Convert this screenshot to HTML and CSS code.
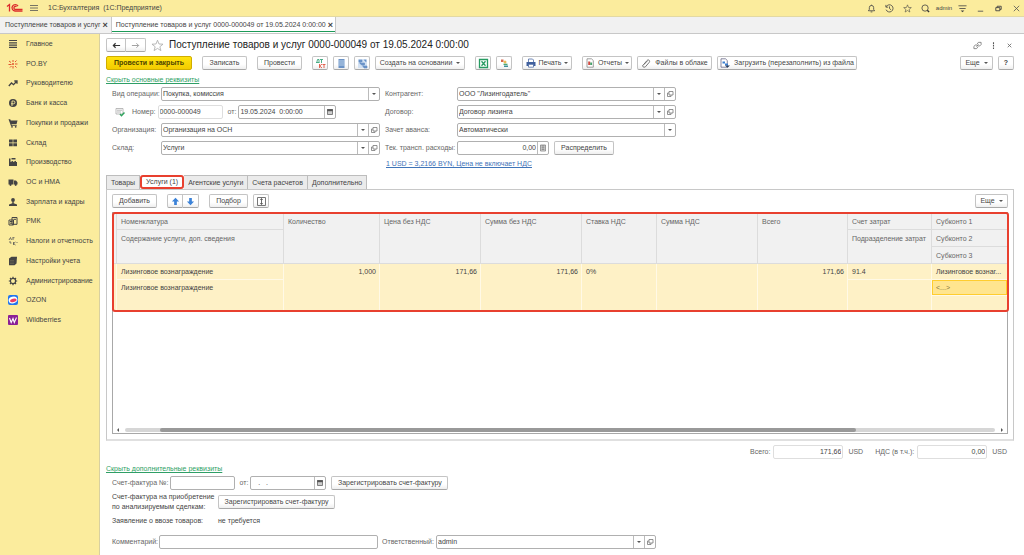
FILE: index.html
```html
<!DOCTYPE html>
<html lang="ru">
<head>
<meta charset="utf-8">
<title>Поступление товаров и услуг</title>
<link rel="stylesheet" href="styles.css">
</head>
<body>
<svg class="defs" aria-hidden="true">
  <symbol id="open" viewBox="0 0 8 8"><path d="M3 1.500h4v3.500h-4zM3 3H1.500v3.500h3.500V5" fill="none" stroke="#777" stroke-width=".8"/></symbol>
  <symbol id="calendar" viewBox="0 0 8 8"><path d="M1.500 1.500h5v5h-5z" fill="#ccc" stroke="#666" stroke-width=".8"/><path d="M1.200 1.200h5.600v2H1.200z" fill="#555"/></symbol>
  <symbol id="star" viewBox="0 0 16 16"><path d="M8 1.500l1.800 4.600 5 .3-3.900 3.100 1.300 4.800L8 11.600l-4.200 2.700 1.300-4.800L1.200 6.400l5-.3z" fill="none" stroke="currentColor"/></symbol>
</svg>

<header class="topbar">
  <svg class="logo" viewBox="0 0 17 10"><path d="M1 3.500L3.500 1.500V8.500M12 3.200A3.200 3.200 0 1 0 9 8h7.500M10.500 3.800A1.500 1.500 0 1 0 9 6.300h7.500" fill="none" stroke="#dc2b2b" stroke-width="1.300"/></svg>
  <button class="plain" aria-label="Меню"><svg class="ico8" viewBox="0 0 8 8"><path d="M0 1.500h8M0 4h8M0 6.500h8" stroke="#555" stroke-width=".8"/></svg></button>
  <span class="app-title">1С:Бухгалтерия&nbsp; (1С:Предприятие)</span>
  <div class="top-tools">
    <button class="plain" aria-label="Уведомления"><svg class="ico9" viewBox="0 0 10 10"><path d="M1.500 7.500h7L7.400 6V4a2.400 2.400 0 0 0-4.800 0v2zM4 8.800h2M5 .8v1" fill="none" stroke="#444" stroke-width=".9"/></svg></button>
    <button class="plain" aria-label="История"><svg class="ico9" viewBox="0 0 10 10"><path d="M1.400 3A4 4 0 1 1 1.200 6.300M1 1v2.500h2.500M5 2.700V5l1.800 1.500" fill="none" stroke="#444" stroke-width=".9"/></svg></button>
    <button class="plain dark" aria-label="Избранное"><svg class="ico9"><use href="#star"/></svg></button>
    <button class="plain" aria-label="Поиск"><svg class="ico9" viewBox="0 0 10 10"><circle cx="4.500" cy="4.500" r="3.500" fill="none" stroke="#444" stroke-width=".9"/><path d="M7 7l2 2" stroke="#333" stroke-width="1.500"/></svg></button>
    <span class="user">admin</span>
    <button class="plain" aria-label="Настройки"><svg class="ico9" viewBox="0 0 10 10"><path d="M.5 2h9M1.500 5h7" stroke="#444" stroke-width=".9"/><path d="M3 7.200h4L5 9.200z" fill="#444"/></svg></button>
    <button class="plain" aria-label="Свернуть"><svg class="ico9" viewBox="0 0 10 10"><path d="M2 8h6" stroke="#555"/></svg></button>
    <button class="plain" aria-label="Восстановить"><svg class="ico9" viewBox="0 0 10 10"><path d="M2 4h4.500v3.500H2zM3.500 4V2.500H8V6H6.500" fill="none" stroke="#444"/></svg></button>
    <button class="plain" aria-label="Закрыть"><svg class="ico9" viewBox="0 0 10 10"><path d="M2 2l6 6M8 2L2 8" stroke="#555" stroke-width=".9"/></svg></button>
  </div>
</header>

<nav class="window-tabs" aria-label="Открытые окна">
  <div class="window-tab">Поступление товаров и услуг <button class="plain close" aria-label="Закрыть вкладку">×</button></div>
  <div class="window-tab current"><span>Поступление товаров и услуг 0000-000049 от 19.05.2024 0:00:00</span> <button class="plain close" aria-label="Закрыть вкладку">×</button></div>
</nav>

<div class="body">
  <nav class="sidebar" aria-label="Разделы">
    <div class="sections">
    <a href="#"><svg viewBox="0 0 10 10"><path d="M1 1.500h8M1 3.800h8M1 6.100h8M1 8.400h8" stroke="#444" stroke-width="1.200"/></svg>Главное</a>
    <a href="#"><svg viewBox="0 0 10 10"><path d="M5 1v2M1 2l2 1.500M.5 5.500h3M2 8.500l1.500-1.500M5 7v2.500M7 3l1.500-1.500M7 5h2.500M7 7l1.500 1.500" stroke="#e2532f"/><circle cx="5" cy="5" r="1" fill="#e2532f"/></svg>РО.BY</a>
    <a href="#"><svg viewBox="0 0 10 10"><path d="M.8 8l2.700-3 2 1.700L8.500 3.500M6.300 3h2.700v2.700" fill="none" stroke="#444" stroke-width="1.300"/></svg>Руководителю</a>
    <a href="#"><svg viewBox="0 0 10 10"><circle cx="5" cy="5" r="4" fill="#444"/><path d="M4 8V3h1.500a1.300 1.300 0 0 1 0 2.800H3" fill="none" stroke="#fbec9d" stroke-width=".9"/></svg>Банк и касса</a>
    <a href="#"><svg viewBox="0 0 10 10"><path d="M.5 1.200h1.700l.6 1.300h6.700l-1 3.800H3.500l.3.900h5v.8H3z" fill="#444"/><circle cx="4" cy="8.800" r=".9" fill="#444"/><circle cx="7.700" cy="8.800" r=".9" fill="#444"/></svg>Покупки и продажи</a>
    <a href="#"><svg viewBox="0 0 10 10"><path d="M1 1.500h3.700v3H1zM5.300 1.500H9v3H5.300zM1 5.300h3.700v3H1zM5.300 5.300H9v3H5.300z" fill="#444"/></svg>Склад</a>
    <a href="#"><svg viewBox="0 0 10 10"><path d="M1 9V1.500h1.500V5L5 3.800V5l3-1.200V5h1v4zM3.500 1h4v1.500h-4z" fill="#444"/></svg>Производство</a>
    <a href="#"><svg viewBox="0 0 10 10"><path d="M.5 2.500h5v5h-5zM6 3.500h2l1.500 1.800v2.200H6z" fill="#444"/><circle cx="2.500" cy="7.800" r="1.100" fill="#444"/><circle cx="7.700" cy="7.800" r="1.100" fill="#444"/></svg>ОС и НМА</a>
    <a href="#"><svg viewBox="0 0 10 10"><circle cx="5" cy="3" r="1.900" fill="#444"/><path d="M4.300 4.500h1.400v1.700L9 7.500V9H1V7.500l3.300-1.300z" fill="#444"/></svg>Зарплата и кадры</a>
    <a href="#"><svg viewBox="0 0 10 10"><path d="M4 1.500h5v6.800H4zM1 4h4.500v5H1zM5.500 3.300H8M2 5.500h2.500M2 7.200h2.500" fill="none" stroke="#444"/></svg>РМК</a>
    <a href="#"><svg viewBox="0 0 10 10"><path d="M1 4L2.500 1.500 3.500 4M5 1.500v2.500M4.500 1.700h2M2 5v2h1.500M5.500 6v3M7.500 6L5.500 7.500 7.500 9M8.500 6.500h1" fill="none" stroke="#555" stroke-width=".8"/></svg>Налоги и отчетность</a>
    <a href="#"><svg viewBox="0 0 10 10"><path d="M1 2.500L3.500.8H9L8.500 7.500 6.500 9.300H1z" fill="#444"/><path d="M2 4.500h4M2 6h4M2 7.500h4" stroke="#87815f" stroke-width=".4"/></svg>Настройки учета</a>
    <a href="#"><svg viewBox="0 0 10 10"><circle cx="5" cy="5" r="2.600" fill="none" stroke="#444" stroke-width="1.200"/><path d="M5 .8v1.500M5 7.700v1.500M.8 5h1.500M7.700 5h1.500M2 2l1 1M7 7l1 1M8 2L7 3M3 7L2 8" stroke="#444" stroke-width="1.200"/></svg>Администрирование</a>
    <a href="#"><svg viewBox="0 0 10 10"><rect width="10" height="10" rx="2" fill="#2275ee"/><ellipse cx="5" cy="5" rx="4.400" ry="3.300" fill="#fff" transform="rotate(-15 5 5)"/><ellipse cx="5.200" cy="5.500" rx="3.300" ry="1.700" fill="#ee3b63" transform="rotate(-15 5 5)"/></svg>OZON</a>
    <a href="#"><svg viewBox="0 0 10 10"><rect width="10" height="10" rx="1" fill="#8b2096"/><path d="M1.500 3l1.700 4.500L5 3.500l1.300 4L8.500 2.500" fill="none" stroke="#fff" stroke-width="1.100"/></svg>Wildberries</a>
    </div>
  </nav>

  <main class="content">
    <div class="title-row">
      <div class="joined">
        <button class="btn" aria-label="Назад"><svg class="ico9" viewBox="0 0 10 10"><path d="M1.500 5h7.500M4 2.500L1.500 5 4 7.500" fill="none" stroke="#333" stroke-width="1.300"/></svg></button>
        <button class="btn" aria-label="Вперед"><svg class="ico9" viewBox="0 0 10 10"><path d="M1 5h7.500M6 2.500L8.500 5 6 7.500" fill="none" stroke="#999"/></svg></button>
      </div>
      <button class="plain fav" aria-label="В избранное"><svg class="ico14"><use href="#star"/></svg></button>
      <h1>Поступление товаров и услуг 0000-000049 от 19.05.2024 0:00:00</h1>
      <div class="title-tools">
        <button class="plain" aria-label="Ссылка"><svg class="ico9" viewBox="0 0 10 10"><path d="M4.500 3.500L6 1.500h3V4L7.500 5.500H5M5.500 6.500L4 8.500H1V6l1.500-1.500H5M3.800 6.200l2.400-2.400" fill="none" stroke="#666" stroke-width=".8"/></svg></button>
        <button class="plain" aria-label="Еще действия"><svg class="ico9" viewBox="0 0 10 10"><path d="M5 1.500v1.800M5 4.300v1.800M5 7.100v1.800" stroke="#555" stroke-width="1.200"/></svg></button>
        <button class="plain" aria-label="Закрыть"><svg class="ico9" viewBox="0 0 10 10"><path d="M3 3l4 4M7 3L3 7" stroke="#666" stroke-width=".9"/></svg></button>
      </div>
    </div>

    <div class="toolbar">
      <button class="btn primary">Провести и закрыть</button>
      <button class="btn w45">Записать</button>
      <button class="btn w45">Провести</button>
      <div class="group">
        <button class="btn sq" aria-label="Дт Кт"><svg class="ico11" viewBox="0 0 11 11"><path d="M1 4.500h3.500M1.800 4.500L2.500 1.500H4v3M5 1.500h3M6.500 1.500v3.500" fill="none" stroke="#3aa57c" stroke-width=".9"/><path d="M4.500 6v4M7 6L4.700 8 7 10M7.500 6.500h3M9 6.500V10" fill="none" stroke="#e0553f" stroke-width=".9"/></svg></button>
        <button class="btn sq" aria-label="Реестр"><svg class="ico11" viewBox="0 0 11 11"><path d="M2.500 1h6v9h-6z" fill="#6b93c6"/><path d="M2.500 3h6M2.500 5h6M2.500 7h6" stroke="#d6e4f4" stroke-width=".8"/></svg></button>
        <button class="btn sq" aria-label="Структура"><svg class="ico11" viewBox="0 0 11 11"><path d="M1 1h9v9H1z" fill="#d3e1f2"/><path d="M2 2h3v2H2zM4.500 5H7.500v2H4.500zM7 8h3v2H7zM3 4v2h1.500M6 7v2h1M7 2h2v2" fill="#6f97ca" stroke="#5f8bc3" stroke-width=".6"/></svg></button>
        <button class="btn w89">Создать на основании <i class="caret"></i></button>
      </div>
      <div class="group">
        <button class="btn sq" aria-label="Excel"><svg class="ico11" viewBox="0 0 11 11"><path d="M1.500 1.500h8v8h-8z" fill="#fff" stroke="#279b62" stroke-width="1.300"/><path d="M3.500 3.200l4 4.600M7.500 3.200l-4 4.600" stroke="#279b62" stroke-width="1.300"/></svg></button>
        <button class="btn sq" aria-label="Обмен"><svg class="ico11" viewBox="0 0 11 11"><path d="M2 1.500h2.500v2.500H2z" fill="#d7694e"/><circle cx="6" cy="4" r="1.500" fill="#e9bb55"/><path d="M4.500 5.700h4V7h-4z" fill="#4ba878"/><path d="M5 7.500h4V9H5z" fill="#3d8f99"/></svg></button>
      </div>
      <button class="btn w49"><svg class="ico10" viewBox="0 0 10 10"><path d="M2.500 4V1h4l1 1v2" fill="#fff" stroke="#4c6ba5" stroke-width=".8"/><path d="M.5 4h9v4h-9z" fill="#40609d"/><path d="M2.500 6.300h5v2.900h-5z" fill="#fff" stroke="#40609d" stroke-width=".7"/></svg>Печать <i class="caret"></i></button>
      <div class="group">
        <button class="btn w49"><svg class="ico10" viewBox="0 0 10 10"><path d="M2 .8h4.500L8.300 2.500v6.700H2z" fill="#fff" stroke="#777" stroke-width=".7"/><path d="M3.200 3.500h2v3.500h-2z" fill="#d24a41"/><path d="M5.200 4.500h1.900v2.500H5.200z" fill="#45a26b"/></svg>Отчеты <i class="caret"></i></button>
        <button class="btn w74"><svg class="ico10" viewBox="0 0 10 10"><path d="M3 6.500l3.500-3.700M2 7.300l4-4.800c1.500-1.500 3.500.2 2.200 1.900L4.500 8.700C3 10 .8 8.500 2 7" fill="none" stroke="#666" stroke-width=".9"/></svg>Файлы в облаке</button>
        <button class="btn w139"><svg class="ico10" viewBox="0 0 10 10"><path d="M1 .8h4.500L7.300 2.500v6.700H1z" fill="#fff" stroke="#557" stroke-width=".7"/><path d="M2.500 3.500h2.500v2H2.500zM5 5.500h3v2H5z" fill="#3a7fd0"/><path d="M5 7.500h5L7.500 9.800z" fill="#263c5c"/></svg>Загрузить (перезаполнить) из файла</button>
      </div>
      <div class="group end">
        <button class="btn w32">Еще <i class="caret"></i></button>
        <button class="btn sq help">?</button>
      </div>
    </div>

    <a class="toggle" href="#">Скрыть основные реквизиты</a>

    <div class="form">
      <div class="form-col left">
        <div class="row"><label class="lab" for="op">Вид операции:</label>
          <div class="combo"><select id="op"><option>Покупка, комиссия</option></select><span class="cell"><i class="caret"></i></span></div></div>
        <div class="row number-row"><svg class="ico10 posted" viewBox="0 0 10 10"><path d="M1 1.500h7v5.500H1z" fill="#fff" stroke="#aaa" stroke-width=".8"/><path d="M2 3.200h5M2 5h4" stroke="#999" stroke-width=".7"/><path d="M5 7l1.500 1.700L9.500 5.500" fill="none" stroke="#2fa35d" stroke-width="1.500"/></svg><label for="num">Номер:</label>
          <div class="combo faint num"><input id="num" value="0000-000049"></div>
          <label class="from" for="date">от:</label>
          <div class="combo date"><input id="date" value="19.05.2024  0:00:00"><button class="cell" aria-label="Календарь"><svg><use href="#calendar"/></svg></button></div></div>
        <div class="row"><label class="lab" for="org">Организация:</label>
          <div class="combo"><input id="org" value="Организация на ОСН"><button class="cell" aria-label="Выбрать"><i class="caret"></i></button><button class="cell" aria-label="Открыть"><svg><use href="#open"/></svg></button></div></div>
        <div class="row"><label class="lab" for="wh">Склад:</label>
          <div class="combo"><input id="wh" value="Услуги"><button class="cell" aria-label="Выбрать"><i class="caret"></i></button><button class="cell" aria-label="Открыть"><svg><use href="#open"/></svg></button></div></div>
      </div>
      <div class="form-col right">
        <div class="row"><label class="lab" for="agent">Контрагент:</label>
          <div class="combo"><input id="agent" value="ООО &quot;Лизингодатель&quot;"><button class="cell" aria-label="Выбрать"><i class="caret"></i></button><button class="cell" aria-label="Открыть"><svg><use href="#open"/></svg></button></div></div>
        <div class="row"><label class="lab" for="deal">Договор:</label>
          <div class="combo"><input id="deal" value="Договор лизинга"><button class="cell" aria-label="Выбрать"><i class="caret"></i></button><button class="cell" aria-label="Открыть"><svg><use href="#open"/></svg></button></div></div>
        <div class="row"><label class="lab" for="adv">Зачет аванса:</label>
          <div class="combo"><select id="adv"><option>Автоматически</option></select><span class="cell"><i class="caret"></i></span></div></div>
        <div class="row"><label class="lab" for="cost">Тек. трансп. расходы:</label>
          <div class="combo cost"><input id="cost" class="num-in" value="0,00"><button class="cell" aria-label="Калькулятор"><svg viewBox="0 0 8 8"><path d="M1.500 1h5v6h-5z" fill="#ddd" stroke="#777" stroke-width=".7"/><path d="M2.500 2h3M2.500 3.800h3M2.500 5.300h3" stroke="#666" stroke-width=".8"/></svg></button></div>
          <button class="btn w60">Распределить</button></div>
        <a class="rate" href="#">1 USD = 3,2166 BYN, Цена не включает НДС</a>
      </div>
    </div>

    <div class="tabs" role="tablist">
      <button role="tab">Товары</button>
      <button role="tab" class="active" aria-selected="true">Услуги (1)</button>
      <button role="tab">Агентские услуги</button>
      <button role="tab">Счета расчетов</button>
      <button role="tab">Дополнительно</button>
    </div>

    <section class="panel">
      <div class="panel-tools">
        <button class="btn w45">Добавить</button>
        <div class="joined small">
          <button class="btn" aria-label="Вверх"><svg class="ico9" viewBox="0 0 10 10"><path d="M5 .8L9 5H6.500v4h-3V5H1z" fill="#3b82d8"/></svg></button>
          <button class="btn" aria-label="Вниз"><svg class="ico9" viewBox="0 0 10 10"><path d="M5 9.200L9 5H6.500V1h-3v4H1z" fill="#3b82d8"/></svg></button>
        </div>
        <div class="group">
          <button class="btn w39">Подбор</button>
          <button class="btn sq" aria-label="Высота строк"><svg class="ico11" viewBox="0 0 11 11"><path d="M1.500 1.500h8v8h-8z" fill="none" stroke="#777"/><path d="M5.500 2.500v6M4.300 4l1.200-1.400L6.700 4M4.300 7l1.200 1.400L6.700 7" fill="none" stroke="#444" stroke-width=".8"/></svg></button>
        </div>
        <button class="btn w32 end">Еще <i class="caret"></i></button>
      </div>
      <div class="grid">
        <div class="marked">
          <table>
            <colgroup><col class="c0"><col class="c1"><col class="c2"><col class="c3"><col class="c3"><col class="c5"><col class="c3"><col class="c7"><col class="c8"><col class="c9"></colgroup>
            <thead>
              <tr><th rowspan="3" class="mark"></th><th>Номенклатура</th><th rowspan="3">Количество</th><th rowspan="3">Цена без НДС</th><th rowspan="3">Сумма без НДС</th><th rowspan="3">Ставка НДС</th><th rowspan="3">Сумма НДС</th><th rowspan="3">Всего</th><th>Счет затрат</th><th>Субконто 1</th></tr>
              <tr><th rowspan="2">Содержание услуги, доп. сведения</th><th rowspan="2">Подразделение затрат</th><th>Субконто 2</th></tr>
              <tr><th>Субконто 3</th></tr>
            </thead>
            <tbody>
              <tr><td rowspan="3" class="mark"></td><td>Лизинговое вознаграждение</td><td rowspan="3" class="r">1,000</td><td rowspan="3" class="r">171,66</td><td rowspan="3" class="r">171,66</td><td rowspan="3">0%</td><td rowspan="3"></td><td rowspan="3" class="r">171,66</td><td>91.4</td><td>Лизинговое вознаг...</td></tr>
              <tr><td rowspan="2">Лизинговое вознаграждение</td><td rowspan="2"></td><td class="selected">&lt;...&gt;</td></tr>
              <tr><td></td></tr>
            </tbody>
          </table>
        </div>
        <div class="scroll"><i class="arrow back"></i><div class="track"><div class="thumb"></div></div><i class="arrow"></i></div>
      </div>
    </section>

    <div class="totals">
      <label for="total">Всего:</label><div class="combo faint sum"><input id="total" class="num-in" value="171,66"></div><span>USD</span>
      <label class="vat" for="vat">НДС (в т.ч.):</label><div class="combo faint sum"><input id="vat" class="num-in" value="0,00"></div><span>USD</span>
    </div>

    <a class="toggle" href="#">Скрыть дополнительные реквизиты</a>

    <div class="extra">
      <div class="row"><label for="inv">Счет-фактура №:</label><div class="combo inv"><input id="inv"></div>
        <label class="from2" for="invdate">от:</label><div class="combo invdate"><input id="invdate" value="   .   ."><button class="cell" aria-label="Календарь"><svg><use href="#calendar"/></svg></button></div>
        <button class="btn w116">Зарегистрировать счет-фактуру</button></div>
      <div class="row"><span class="wide-label">Счет-фактура на приобретение<br>по анализируемым сделкам:</span><button class="btn w116">Зарегистрировать счет-фактуру</button></div>
      <div class="row"><span class="wide-label">Заявление о ввозе товаров:</span><span class="plain-value">не требуется</span></div>
      <div class="row last"><label class="comment-label" for="com">Комментарий:</label><div class="combo com"><input id="com"></div>
        <label class="resp-label" for="resp">Ответственный:</label><div class="combo resp"><input id="resp" value="admin"><button class="cell" aria-label="Выбрать"><i class="caret"></i></button><button class="cell" aria-label="Открыть"><svg><use href="#open"/></svg></button></div></div>
    </div>
  </main>
</div>
</body>
</html>
```
FILE: styles.css
```css
* { box-sizing: border-box; }
body {
  margin: 0;
  min-height: 100vh;
  display: flex;
  flex-direction: column;
  font: 7px/10px "Liberation Sans", Arial, sans-serif;
  color: #444;
  background: #fff;
}
button, input, select { font: inherit; color: inherit; margin: 0; padding: 0; }
.defs { position: absolute; width: 0; height: 0; }
.plain { border: 0; background: none; display: flex; align-items: center; color: #666; }
.plain.dark { color: #444; }
.ico8 { width: 8px; height: 8px; }
.ico9 { width: 9px; height: 9px; }
.ico10 { width: 10px; height: 10px; flex: none; }
.ico11 { width: 11px; height: 11px; }
.ico14 { width: 13px; height: 13px; }

/* application bar */
.topbar { display: flex; align-items: center; height: 17px; padding: 0 3px 0 6px; background: #fbec9d; border-bottom: 1px solid #e3d9a3; }
.logo { width: 17px; height: 10px; margin-right: 7px; }
.app-title { margin-left: 10px; }
.top-tools { display: flex; align-items: center; gap: 9px; margin-left: auto; }
.user { width: 18px; margin: 0 -4px; font-size: 6px; text-align: center; }

/* open windows */
.window-tabs { display: flex; height: 17px; background: #f1f1f1; border-bottom: 1px solid #c8c8c8; }
.window-tab { display: flex; align-items: center; gap: 2px; padding: 0 3px 0 5px; border-right: 1px solid #c8c8c8; }
.window-tab.current { background: #fff; padding: 0 2px 0 4px; box-shadow: inset 0 -1px 0 #fff, inset 0 -2px 0 #1c9a58; }
.close { font-size: 9px; font-weight: bold; color: #444; }

.body { display: flex; flex: 1; }

/* sections */
.sidebar { width: 100px; flex: none; background: #fbec9d; border-right: 1px solid #d8d0a0; }
.sections { display: grid; grid-auto-rows: 1fr; height: 296px; }
.sidebar a { display: flex; align-items: center; gap: 8px; padding-left: 8px; color: #444; text-decoration: none; }
.sidebar svg { width: 10px; height: 10px; flex: none; }

.content { flex: 1; min-width: 0; padding: 4px 10px 5px 6px; }

/* buttons */
.btn {
  display: flex; align-items: center; justify-content: center; gap: 4px;
  height: 14px; padding: 0 4px; white-space: nowrap;
  border: 1px solid #c4c4c4; border-bottom-color: #a8a8a8; border-radius: 2px;
  background: linear-gradient(#fff 60%, #efefef);
}
.btn.sq { width: 16px; padding: 0; }
.btn.primary { width: 86px; font-weight: bold; background: linear-gradient(#ffe30e, #f3cc00); border-color: #d0ad00; color: #4d4400; }
.help { font-weight: bold; }
.w32 { width: 33px; } .w39 { width: 39px; } .w45 { width: 45px; } .w49 { width: 50px; } .w60 { width: 60px; }
.w74 { width: 75px; } .w89 { width: 90px; } .w116 { width: 117px; } .w139 { width: 140px; }
.w49 { gap: 3px; }
.caret { flex: none; border: 2px solid transparent; border-top-color: #555; border-bottom: 0; }
.joined { display: flex; }
.joined .btn { width: 20px; border-radius: 2px 0 0 2px; }
.joined .btn + .btn { border-left: 0; border-radius: 0 2px 2px 0; }
.joined.small .btn { width: 16px; padding: 0; }
.group { display: flex; gap: 5px; }
.end { margin-left: auto; }

.title-row { display: flex; align-items: center; height: 14px; }
.title-row h1 { margin: 0; font-size: 10px; line-height: 14px; font-weight: normal; color: #222; white-space: nowrap; }
.fav { margin: 0 5px; color: #aaa; }
.title-tools { display: flex; gap: 7px; margin-left: auto; }
.toolbar { display: flex; gap: 10px; margin-top: 4px; }

.toggle { display: table; margin-top: 5px; color: #2f9f66; line-height: 10px; }

/* input fields */
.form { display: flex; gap: 5px; margin-top: 2px; padding-left: 6px; }
.form-col { display: flex; flex-direction: column; gap: 4px; }
.left { width: 268px; }
.right { width: 291px; }
.row { display: flex; align-items: center; height: 14px; white-space: nowrap; color: #666; }
.row .btn { color: #444; }
.lab { width: 49px; flex: none; }
.right .lab { width: 72px; }
.combo { display: flex; flex: 1; min-width: 0; height: 14px; border: 1px solid #b0b0b0; border-radius: 2px; background: #fff; color: #444; }
.combo input, .combo select { flex: 1; min-width: 0; width: 0; border: 0; outline: 0; background: none; appearance: none; padding: 0 1px; }
.combo.faint { border-color: #dedede; }
.combo .num-in { text-align: right; }
.cell { width: 11px; flex: none; display: flex; align-items: center; justify-content: center; border: 0; border-left: 1px solid #bbb; background: none; }
.cell svg { width: 8px; height: 8px; }
.number-row { padding-left: 3px; }
.posted { margin-right: 7px; }
.num { flex: none; width: 65px; margin-left: 2px; }
.from { margin: 0 2px 0 5px; }
.date { flex: none; width: 98px; }
.cost { flex: none; width: 92px; margin-right: 5px; }
.rate { color: #3f74b8; margin-left: 1px; }

/* document tabs */
.tabs { display: flex; margin-top: 6px; height: 14px; }
.tabs button { padding: 0 4px; border: 1px solid #bdbdbd; border-left: 0; border-bottom: 0; background: #ebebeb; color: #444; white-space: nowrap; }
.tabs button:first-child { border-left: 1px solid #bdbdbd; }
.tabs .active { background: #fff; border: 2px solid #e8402f; border-radius: 3px; }

.panel { border: 1px solid #c8c8c8; border-width: 1px 1px 2px; border-bottom-color: #e0e0e0; padding: 4px 5px 5px; }
.panel-tools { display: flex; gap: 10px; margin-bottom: 4px; }
.grid { border: 1px solid #a8a8a8; min-height: 222px; display: flex; flex-direction: column; }
.marked { position: relative; }
.marked::after { content: ""; position: absolute; inset: -1px -2px -1px -1px; border: 2px solid #e8402f; border-radius: 3px; pointer-events: none; }
table { width: 100%; table-layout: fixed; border-collapse: separate; border-spacing: 0; }
.c0 { width: 4px; } .c1 { width: 167px; } .c2 { width: 96px; } .c3 { width: 101px; } .c5 { width: 75px; }
.c7 { width: 90px; } .c8 { width: 84px; } .c9 { width: 76px; }
tr { height: 15px; }
thead tr { height: 17px; }
th, td { padding: 3px 3px 2px 4px; font-weight: normal; text-align: left; vertical-align: top; line-height: 10px; white-space: nowrap; overflow: hidden; }
.mark { padding: 0; }
th { padding: 4px 3px 2px 4px; background: #f1f1f1; border-right: 1px solid #dcdcdc; border-bottom: 1px solid #dcdcdc; color: #666; }
td { background: #fef1c6; border-right: 1px solid #fff9e6; border-bottom: 1px solid #fff9e6; color: #444; }
td.r { text-align: right; }
td.selected { background: #ffe58f; box-shadow: inset 0 0 0 1px #ffcd2e; color: #85753f; }
.scroll { display: flex; align-items: center; gap: 6px; margin-top: auto; padding: 1px 4px; }
.track { flex: 1; height: 4px; border-radius: 2px; background: #d6d6d6; }
.thumb { width: 80%; margin-left: 4%; height: 4px; border-radius: 2px; background: #999; }
.arrow { border: 2px solid transparent; border-left-color: #555; border-right: 0; }
.arrow.back { border-right: 2px solid #555; border-left: 0; }

.totals { display: flex; justify-content: flex-end; align-items: center; gap: 5px; margin: 4px 7px 0; color: #666; }
.totals .combo { flex: none; width: 70px; }
.totals label { margin-right: -2px; }
.totals .vat { margin-left: 7px; }

.extra { display: flex; flex-direction: column; gap: 5px; padding-left: 6px; margin-top: 2px; }
.inv { flex: none; width: 65px; margin-left: 1px; }
.from2 { margin: 0 2px 0 5px; }
.invdate { flex: none; width: 76px; margin-right: 5px; }
.invdate input { white-space: pre; }
.wide-label { width: 106px; color: #444; }
.plain-value { color: #444; }
.row.last { margin-top: 2px; }
.comment-label { width: 47px; }
.com { flex: none; width: 219px; margin-right: 4px; }
.resp-label { width: 54px; }
.resp { flex: none; width: 220px; }
```
